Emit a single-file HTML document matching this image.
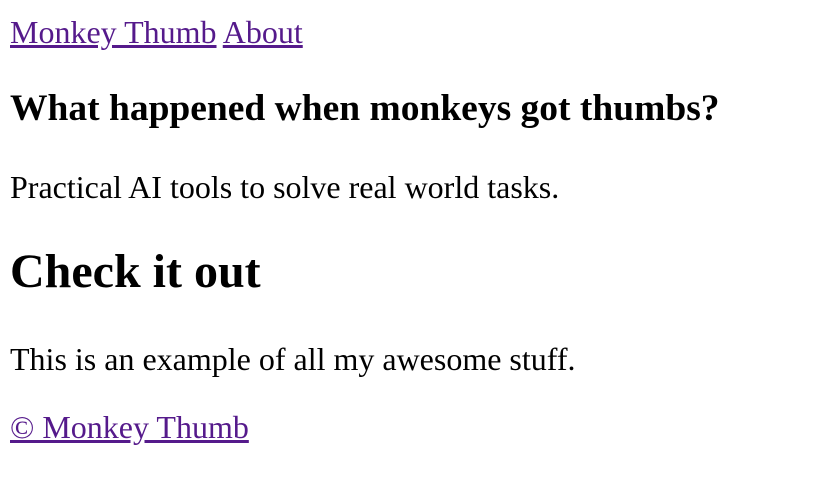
<!DOCTYPE html>
<html><head><meta charset="utf-8"><style>
body{margin:0;background:#fff;font-family:"Liberation Serif","Times New Roman",serif;color:#000;}
.l{position:absolute;left:10px;line-height:1;white-space:nowrap;font-size:32px;margin:0}
a{color:#551a8b;text-decoration:underline;}
</style></head><body>
<div class="l" style="top:15.5px"><a href="#">Monkey Thumb</a> <a href="#">About</a></div>
<h3 class="l" style="top:89.5px;font-size:37.5px;font-weight:bold">What happened when monkeys got thumbs?</h3>
<p class="l" style="top:170.5px">Practical AI tools to solve real world tasks.</p>
<h2 class="l" style="top:247.5px;font-size:48px;font-weight:bold">Check it out</h2>
<p class="l" style="top:342.5px">This is an example of all my awesome stuff.</p>
<p class="l" style="top:410.5px"><a href="#">© Monkey Thumb</a></p>
</body></html>
